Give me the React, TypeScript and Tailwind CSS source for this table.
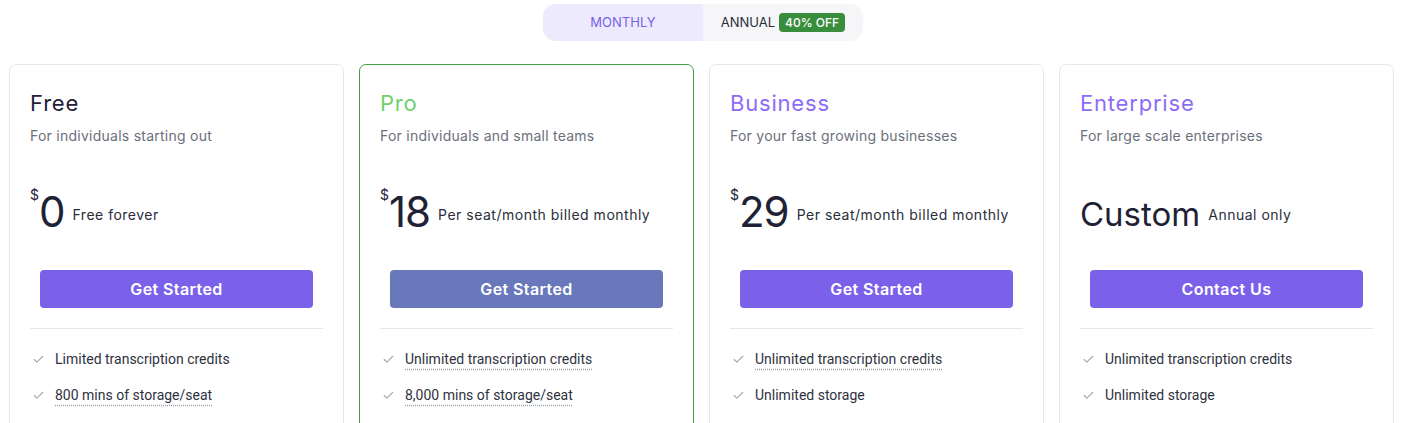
import { Check } from 'lucide-react';

type Feature = { text: string; dotted?: boolean };

type Plan = {
  name: string;
  nameColor: string;
  tagline: string;
  price?: string;
  custom?: string;
  note: string;
  cta: string;
  buttonColor: string;
  highlight?: boolean;
  features: Feature[];
};

const PLANS: Plan[] = [
  {
    name: 'Free',
    nameColor: 'text-[#1f2235]',
    tagline: 'For individuals starting out',
    price: '0',
    note: 'Free forever',
    cta: 'Get Started',
    buttonColor: 'bg-[#7b61ea]',
    features: [
      { text: 'Limited transcription credits' },
      { text: '800 mins of storage/seat', dotted: true }
    ]
  },
  {
    name: 'Pro',
    nameColor: 'text-[#6dd16b]',
    tagline: 'For individuals and small teams',
    price: '18',
    note: 'Per seat/month billed monthly',
    cta: 'Get Started',
    buttonColor: 'bg-[#6878bb]',
    highlight: true,
    features: [
      { text: 'Unlimited transcription credits', dotted: true },
      { text: '8,000 mins of storage/seat', dotted: true }
    ]
  },
  {
    name: 'Business',
    nameColor: 'text-[#8c6cf6]',
    tagline: 'For your fast growing businesses',
    price: '29',
    note: 'Per seat/month billed monthly',
    cta: 'Get Started',
    buttonColor: 'bg-[#7b61ea]',
    features: [
      { text: 'Unlimited transcription credits', dotted: true },
      { text: 'Unlimited storage' }
    ]
  },
  {
    name: 'Enterprise',
    nameColor: 'text-[#8c6cf6]',
    tagline: 'For large scale enterprises',
    custom: 'Custom',
    note: 'Annual only',
    cta: 'Contact Us',
    buttonColor: 'bg-[#7b61ea]',
    features: [
      { text: 'Unlimited transcription credits' },
      { text: 'Unlimited storage' }
    ]
  }
];

function PlanCard({ plan }: { plan: Plan }) {

  return (

    <div
      className={`flex-1 rounded-[7px] border bg-white px-5 pt-[22px] pb-10 ${
        plan.highlight ? 'border-[#43a047]' : 'border-[#e8e8ec]'
      }`}
    >

      <h3 className={`text-[22px] leading-[32px] tracking-[0.8px] ${plan.nameColor}`}>
        {plan.name}
      </h3>

      <p className="mt-[7px] text-sm leading-5 tracking-[0.25px] text-[#6b6f7b]">
        {plan.tagline}
      </p>

      {/* Price */}

      <div className="mt-[45px] flex h-[42px] items-end text-[#1f2235]">

        {plan.price !== undefined ? (
          <>
            <span className="self-start text-[14px] leading-[14px] -mt-[3px]">$</span>
            <span className="text-[42px] leading-[42px] tracking-[-1px]">{plan.price}</span>
          </>
        ) : (
          <span className="text-[33px] leading-[42px] mb-[-2px]">{plan.custom}</span>
        )}

        <span className="mb-[8px] ml-2 text-sm leading-5 tracking-[0.5px] text-[#2a2d3a]">
          {plan.note}
        </span>

      </div>

      {/* Button */}

      <button
        type="button"
        className={`mx-[10px] mt-[37px] flex h-[38px] w-[calc(100%-20px)] items-center justify-center rounded-[4px] text-[16px] font-semibold tracking-[0.4px] text-white ${plan.buttonColor}`}
      >
        {plan.cta}
      </button>

      <div className="mt-5 border-t border-[#e5e6ea]" />

      {/* Features */}

      <ul className="mt-[20px] space-y-4 font-['Roboto',sans-serif]">

        {plan.features.map(f => (

          <li key={f.text} className="flex items-center text-sm leading-5 text-[#2f3240]">

            <Check size={13} strokeWidth={2} className="ml-[2px] mr-[10px] text-[#a3a8b0]" />

            <span
              className={
                f.dotted
                  ? 'underline decoration-dotted decoration-[#9aa0aa] underline-offset-[5px]'
                  : ''
              }
            >
              {f.text}
            </span>

          </li>

        ))}

      </ul>

    </div>

  );

}

export default function App() {

  return (

    <div className="h-[423px] overflow-hidden bg-white pt-1 font-['Inter',sans-serif]">

      {/* Billing toggle */}

      <div className="flex justify-center">

        <div className="flex h-[37px] overflow-hidden rounded-[13px] bg-[#f6f6f8] text-[13px]">

          <div className="flex w-[160px] items-center justify-center bg-[#edeafd] text-[#7462ea]">
            MONTHLY
          </div>

          <div className="flex w-[160px] items-center justify-center gap-1 text-[#2a2d3a]">
            ANNUAL
            <span className="rounded-[4px] bg-[#388e3c] px-[6px] text-[12px] font-medium leading-[19px] text-white">
              40% OFF
            </span>
          </div>

        </div>

      </div>

      {/* Plans */}

      <div className="mt-[23px] flex gap-[15px] pl-[9px] pr-[12px]">

        {PLANS.map(plan => (
          <PlanCard key={plan.name} plan={plan} />
        ))}

      </div>

    </div>

  );

}
